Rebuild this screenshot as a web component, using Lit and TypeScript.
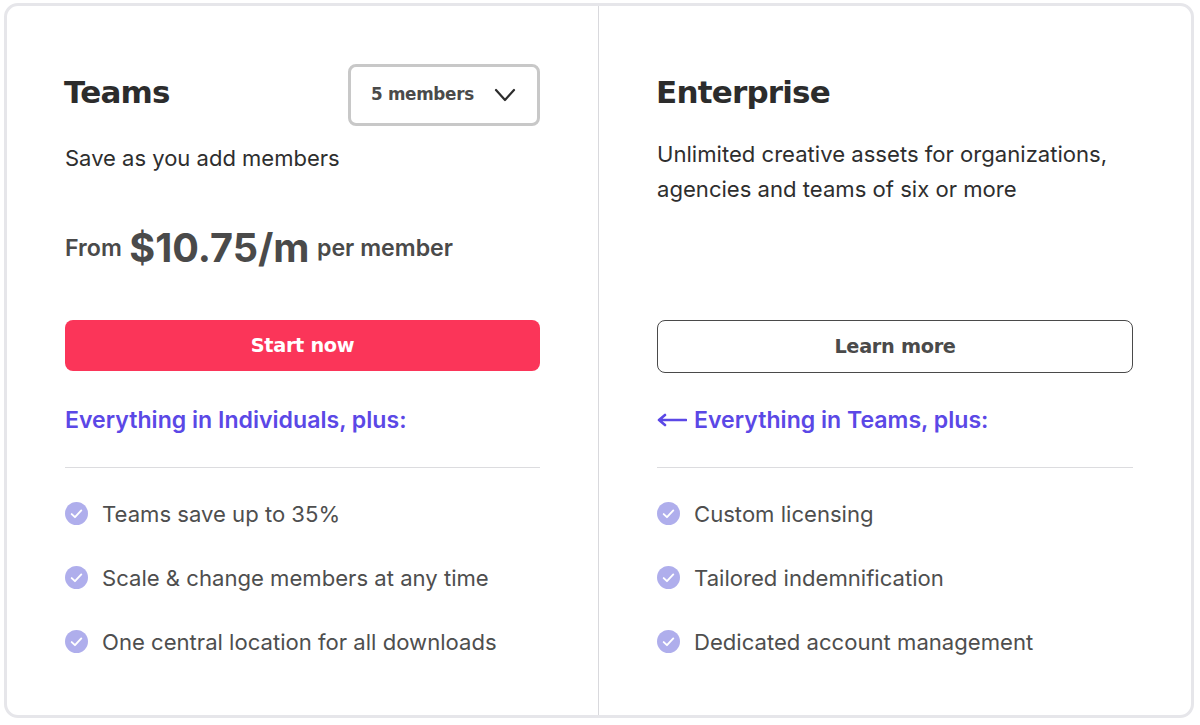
import { LitElement, html, css } from "lit";
import { customElement } from "lit/decorators.js";

const check = html`<svg class="check" viewBox="0 0 24 24" aria-hidden="true"><circle cx="12" cy="12" r="12" fill="#afaeec"/><path d="M7 12.6l3.4 3.2L17 8.8" fill="none" stroke="#fff" stroke-width="2" stroke-linecap="round" stroke-linejoin="round"/></svg>`;

const list = (items: string[]) => html`<ul class="list">${items.map((t) => html`<li>${check}<span>${t}</span></li>`)}</ul>`;

@customElement("app-root")
export class AppRoot extends LitElement {
  static styles = css`
    :host { display: block; width: 1200px; height: 725px; background: #fff; font-family: Inter, "Liberation Sans", sans-serif; box-sizing: border-box; padding: 3px 6px 7px 4px; }
    .card { box-sizing: border-box; height: 100%; border: 3px solid #e6e6ea; border-radius: 14px; display: grid; grid-template-columns: 592px 1fr; background: #fff; }
    .col { box-sizing: border-box; display: flex; flex-direction: column; min-width: 0; }
    .left { border-right: 1px solid #d9d9dd; padding: 0 58px; }
    .right { padding: 0 58px; }
    .top { height: 314px; box-sizing: border-box; padding-top: 58px; }
    .head { display: flex; justify-content: space-between; align-items: flex-start; height: 62px; }
    h2 { margin: 0 0 0 -1px; font-family: "DejaVu Sans", sans-serif; font-weight: 700; font-size: 31px; line-height: 57px; color: #2c2c2c; letter-spacing: -0.8px; }
    .select { box-sizing: border-box; width: 192px; height: 62px; border: 3px solid #c8c8c8; border-radius: 8px; display: flex; align-items: center; justify-content: space-between; padding: 0 21px 0 20px; font-family: "DejaVu Sans", sans-serif; font-weight: 700; font-size: 16.8px; color: #4a4a4a; letter-spacing: -0.3px; }
    .select span { margin-bottom: 2px; }
    .select svg { width: 22px; height: 14px; }
    .sub { margin: 19px 0 0; font-size: 22px; line-height: 26px; color: #2e2e2e; }
    .desc { margin: 16px 0 0; font-size: 22.1px; line-height: 35px; color: #2e2e2e; }
    .price { margin: 49px 0 0; display: flex; align-items: center; gap: 7.5px; font-size: 23.2px; font-weight: 600; color: #4a4a4a; line-height: 56px; }
    .price strong { font-size: 39.6px; font-weight: 700; }
    .btn { box-sizing: border-box; display: flex; align-items: center; justify-content: center; border-radius: 8px; font-family: "DejaVu Sans", sans-serif; font-weight: 700; font-size: 19.3px; letter-spacing: -0.3px; }
    .primary { height: 51px; background: #fb3559; color: #fff; }
    .outline { height: 53px; background: #fff; border: 1.5px solid #4a4a4a; color: #4a4a4a; }
    .plus { margin: 0; height: 45px; display: flex; align-items: center; gap: 7px; font-size: 23.1px; font-weight: 600; color: #5b48e6; }
    .left .plus { margin-top: 26px; }
    .right .plus { margin-top: 24px; }
    .plus svg { width: 30px; height: 14px; }
    .rule { height: 1px; background: #dcdcdf; margin-top: 24.5px; }
    .list { list-style: none; margin: 14.5px 0 0; padding: 0; display: flex; flex-direction: column; }
    .list li { display: flex; align-items: center; gap: 14px; height: 64px; font-size: 22.1px; color: #4e4e4e; }
    .check { width: 23px; height: 23px; flex: none; margin-bottom: 2px; }
  `;

  render() {
    return html`<div class="card">
      <section class="col left">
        <div class="top">
          <div class="head">
            <h2>Teams</h2>
            <div class="select"><span>5 members</span>
              <svg viewBox="0 0 22 14"><path d="M2 2l9 10 9-10" fill="none" stroke="#2c2c2c" stroke-width="2.2" stroke-linecap="round" stroke-linejoin="round"/></svg>
            </div>
          </div>
          <p class="sub">Save as you add members</p>
          <p class="price"><span>From</span><strong>$10.75/m</strong><span>per member</span></p>
        </div>
        <div class="btn primary">Start now</div>
        <h3 class="plus">Everything in Individuals, plus:</h3>
        <div class="rule"></div>
        ${list(["Teams save up to 35%", "Scale & change members at any time", "One central location for all downloads"])}
      </section>
      <section class="col right">
        <div class="top">
          <h2>Enterprise</h2>
          <p class="desc">Unlimited creative assets for organizations,<br />agencies and teams of six or more</p>
        </div>
        <div class="btn outline">Learn more</div>
        <h3 class="plus">
          <svg viewBox="0 0 30 14"><path d="M29 7H2M8 2L2 7l6 5" fill="none" stroke="#5b48e6" stroke-width="2.6" stroke-linecap="round" stroke-linejoin="round"/></svg>
          Everything in Teams, plus:
        </h3>
        <div class="rule"></div>
        ${list(["Custom licensing", "Tailored indemnification", "Dedicated account management"])}
      </section>
    </div>`;
  }
}
